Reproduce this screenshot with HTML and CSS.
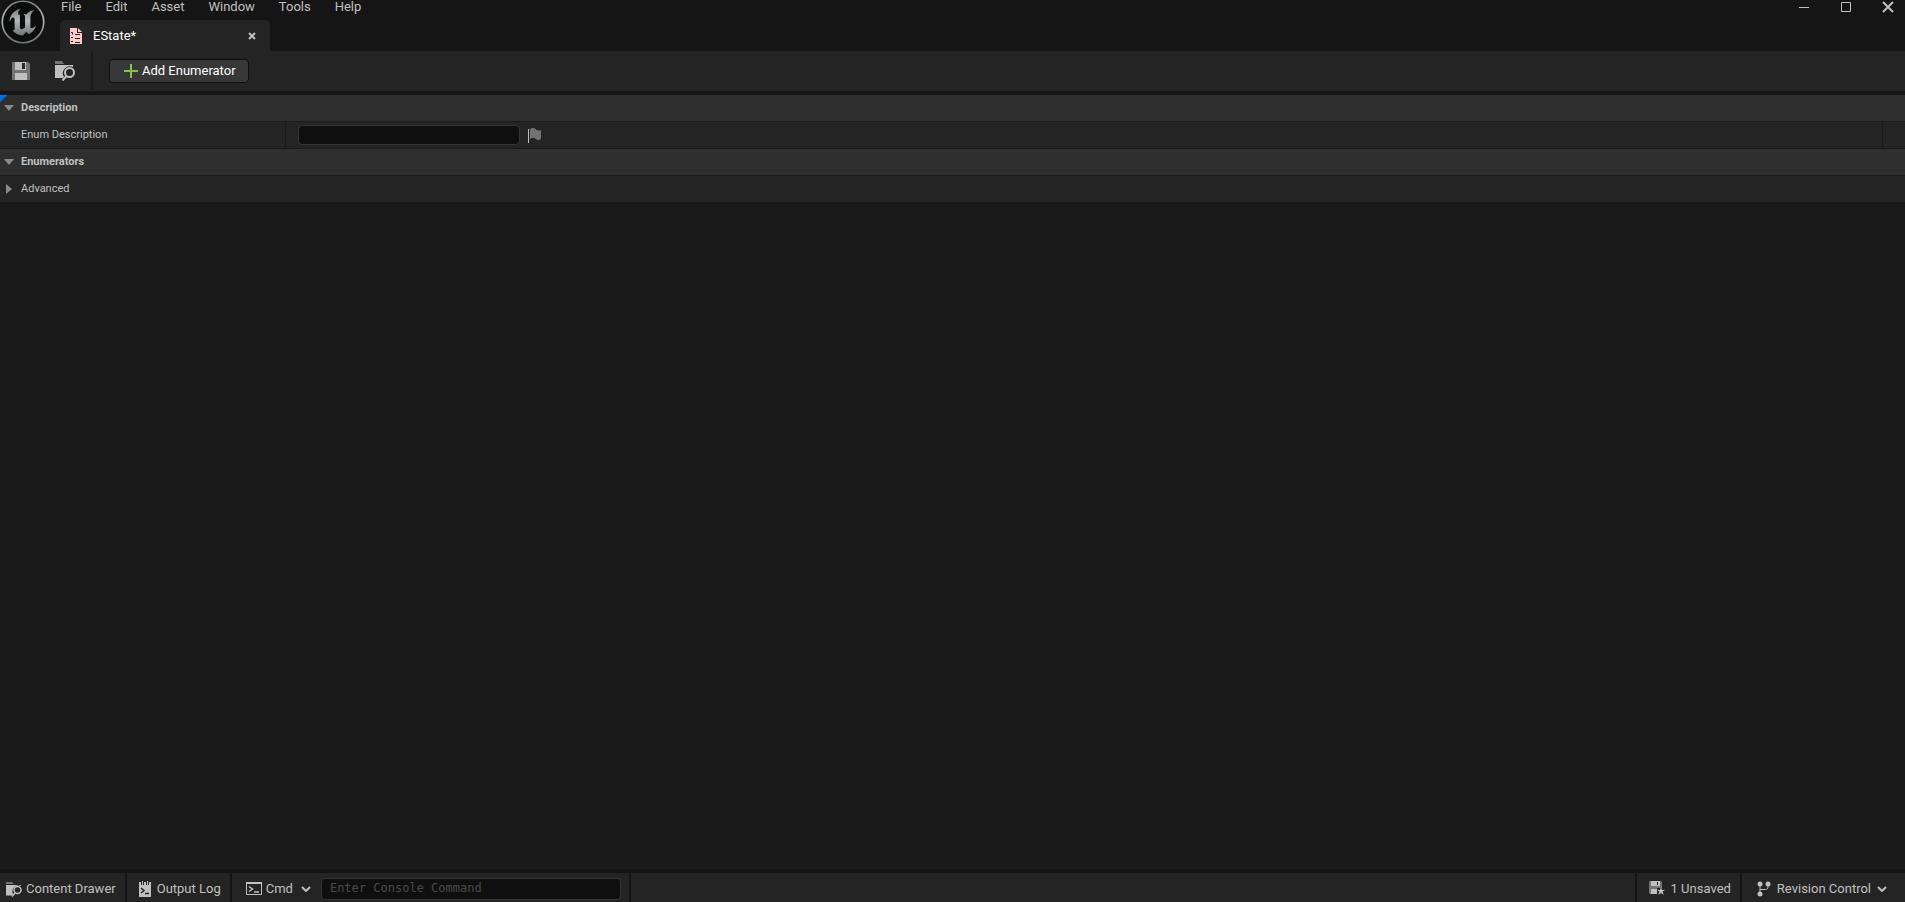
FILE: index.html
```html
<!DOCTYPE html>
<html lang="en">
<head>
    <meta charset="UTF-8">
    <meta name="viewport" content="width=device-width, initial-scale=1.0">
    <title>EState</title>
    <link rel="stylesheet" href="styles.css">
</head>
<body>

    <!-- Title bar -->
    <header class="titlebar">
        <a class="logo" href="#" aria-label="Unreal Editor">
            <svg width="44" height="44" viewBox="0 0 24 24">
                <defs>
                    <linearGradient id="metal" x1="0" y1="0" x2="0" y2="1">
                        <stop offset="0" stop-color="#7c8080"/>
                        <stop offset="0.45" stop-color="#b4b8b8"/>
                        <stop offset="1" stop-color="#6c7474"/>
                    </linearGradient>
                </defs>
                <circle cx="12" cy="12" r="11.300" fill="#0c0c0c" stroke="url(#metal)" stroke-width="0.900"/>
                <path fill="url(#metal)" d="M19.130 13.729c-.206.997-1.126 3.557-4.060 4.942l-1.179-1.325-1.988 2a7.338 7.338 0 0 1-5.804-2.978 2.859 2.859 0 0 0 .65.123c.326.006.678-.114.678-.66v-5.394a.89.89 0 0 0-1.116-.89c-.92.212-1.656 2.509-1.656 2.509a7.304 7.304 0 0 1 2.528-5.597 7.408 7.408 0 0 1 3.730-1.721c-1.006.573-1.570 1.507-1.570 2.290 0 1.262.76 1.109.984.923v7.280a1.157 1.157 0 0 0 .148.256 1.075 1.075 0 0 0 .88.445c.76 0 1.747-.868 1.747-.868V9.172c0-.6-.452-1.324-.905-1.572 0 0 .838-.149 1.484.346a5.537 5.537 0 0 1 .387-.425c1.508-1.480 2.929-1.902 4.112-2.112 0 0-2.151 1.690-2.151 3.960 0 1.687.043 5.801.043 5.801.799.771 1.986-.342 3.059-1.441z"/>
            </svg>
        </a>
        <div class="title-main">
            <nav class="menu">
                <button>File</button>
                <button>Edit</button>
                <button>Asset</button>
                <button>Window</button>
                <button>Tools</button>
                <button>Help</button>
            </nav>
            <div class="tab">
                <svg width="12" height="16" viewBox="0 0 12 16">
                    <path fill="#ffc9c9" d="M0 0h7v5h5v11H0z"/>
                    <path fill="#ffc9c9" d="M8 0l4 4H8z"/>
                    <path stroke="#242424" fill="none" d="M5 6.500h5M5 10.500h5M5 14.500h5M1 4.500h1.500v2M1 9.500h2M1 13.500h2"/>
                </svg>
                <span class="tab-name">EState*</span>
                <button class="tab-close" aria-label="Close tab">
                    <svg width="8" height="8" viewBox="0 0 8 8"><path d="M1 1l6 6M7 1l-6 6" stroke="#c0c0c0" stroke-width="2"/></svg>
                </button>
            </div>
        </div>
        <div class="window-buttons">
            <button aria-label="Minimize"><svg width="12" height="12" viewBox="0 0 12 12"><path d="M1 6.500h10"/></svg></button>
            <button aria-label="Maximize"><svg width="12" height="12" viewBox="0 0 12 12"><path d="M1.500 1.500h9v9h-9z"/></svg></button>
            <button aria-label="Close"><svg width="12" height="12" viewBox="0 0 12 12"><path class="thick" d="M1 1l10 10M11 1l-10 10"/></svg></button>
        </div>
    </header>

    <!-- Toolbar -->
    <div class="toolbar">
        <button class="tool" aria-label="Save">
            <svg width="18" height="18" viewBox="0 0 18 18">
                <path fill="#737373" d="M0 0h16l2 2v16H0z"/>
                <path fill="#c0c0c0" d="M3 0h11v8H3zM3 11h12v7H3z"/>
                <path fill="#2a2a2a" d="M10 1h3v6h-3z"/>
            </svg>
        </button>
        <button class="tool" aria-label="Browse to asset">
            <svg width="20" height="20" viewBox="0 0 20 20">
                <path fill="#737373" d="M0 0h7l2 3H0z"/>
                <path fill="#c0c0c0" d="M0 4h18v2a7 7 0 0 0-9 10l-1 1H0z"/>
                <circle cx="14.500" cy="11.500" r="4.500" fill="#242424" stroke="#c0c0c0" stroke-width="2"/>
                <path d="M11.500 15l-4 4.500" stroke="#c0c0c0" stroke-width="2"/>
            </svg>
        </button>
        <span class="divider"></span>
        <button class="add-btn">
            <svg width="14" height="14" viewBox="0 0 14 14"><path d="M7 0v14M0 7h14" stroke="#8bc24a" stroke-width="2"/></svg>
            Add Enumerator
        </button>
    </div>

    <!-- Details panel -->
    <main class="details">
        <h2 class="category focused">
            <button><svg class="arrow" width="10" height="10" viewBox="0 0 10 10"><path d="M0 2h10L5 8z"/></svg>Description</button>
        </h2>
        <div class="property">
            <label class="property-name" for="enum-description">Enum Description</label>
            <div class="property-value">
                <input type="text" id="enum-description">
                <button class="flag" aria-label="Localize">
                    <svg width="14" height="16" viewBox="0 0 14 16">
                        <path fill="#c0c0c0" d="M0 2h1v14H0z"/>
                        <path fill="#737373" d="M2 2c2-1.500 4-1.500 5.500 0S11 4 13 3v9c-2 1.500-4 1-5.500-.3S4 10.500 2 12z"/>
                    </svg>
                </button>
            </div>
            <div class="property-extra"></div>
        </div>
        <h2 class="category">
            <button><svg class="arrow" width="10" height="10" viewBox="0 0 10 10"><path d="M0 2h10L5 8z"/></svg>Enumerators</button>
        </h2>
        <div class="category advanced">
            <button><svg class="arrow" width="10" height="10" viewBox="0 0 10 10"><path d="M2 0v10l6-5z"/></svg>Advanced</button>
        </div>
    </main>

    <!-- Status bar -->
    <footer class="statusbar">
        <button class="status-item drawer">
            <svg width="16" height="16" viewBox="0 0 16 16">
                <path fill="#737373" d="M0 1h6l2 2H0z"/>
                <path fill="#c0c0c0" d="M0 4h15v1a6 6 0 0 0-8 8l-1 1.500H0z"/>
                <circle cx="11.500" cy="9" r="3.500" fill="#242424" stroke="#c0c0c0" stroke-width="1.500"/>
                <path d="M9 12l-3 3.500" stroke="#c0c0c0" stroke-width="1.500"/>
            </svg>
            Content Drawer
        </button>
        <button class="status-item">
            <svg width="12" height="16" viewBox="0 0 12 16">
                <path fill="#c0c0c0" d="M0 1h2v3h1V0h1v4h1V1h2v3h1V0h1v4h1V1h2v15H0z"/>
                <path d="M2 7l3 2.500L2 12M6 12.500h4" fill="none" stroke="#242424" stroke-width="1.500"/>
            </svg>
            Output Log
        </button>
        <div class="status-item console">
            <button class="cmd">
                <svg width="16" height="13" viewBox="0 0 16 13">
                    <path d="M.5.5h15v12H.5z" fill="none" stroke="#c0c0c0"/>
                    <path d="M0 0h16v2H0z" fill="#c0c0c0"/>
                    <path d="M3 4.500l3.500 2.500L3 9.500M8 10h5" fill="none" stroke="#c0c0c0" stroke-width="1.500"/>
                </svg>
                Cmd
                <svg class="chevron" width="10" height="6" viewBox="0 0 10 6"><path d="M1 1l4 4 4-4"/></svg>
            </button>
            <input type="text" placeholder="Enter Console Command" aria-label="Console command">
        </div>
        <div class="status-space"></div>
        <button class="status-item">
            <svg width="16" height="15" viewBox="0 0 16 15">
                <path fill="#737373" d="M0 0h12l1 1v12H0z"/>
                <path fill="#c0c0c0" d="M2 0h9v5H2zM2 8h7v5H2z"/>
                <path fill="#242424" d="M8 1h1v3H8zM8 7h5v6H8z"/>
                <path fill="#c0c0c0" d="M12 6l1 3 3-.2-2.400 1.900 1.200 3.300-2.800-2-2.800 2 1.200-3.300L8 8.800l3 .2z"/>
            </svg>
            1 Unsaved
        </button>
        <button class="status-item revision">
            <svg width="14" height="16" viewBox="0 0 14 16">
                <g fill="#c0c0c0"><circle cx="3" cy="3" r="2.500"/><circle cx="11" cy="3" r="2.500"/><circle cx="3" cy="13" r="2.500"/></g>
                <path d="M3 3v10M11 3v3c0 1.500-1 2.500-2.500 2.500H3" fill="none" stroke="#c0c0c0"/>
            </svg>
            Revision Control
            <svg class="chevron" width="10" height="6" viewBox="0 0 10 6"><path d="M1 1l4 4 4-4"/></svg>
        </button>
    </footer>

</body>
</html>
```
FILE: styles.css
```css
* {
    box-sizing: border-box;
}

body {
    margin: 0;
    min-height: 100vh;
    display: flex;
    flex-direction: column;
    background-color: #1a1a1a;
    color: #c0c0c0;
    font-family: Roboto, Arial, sans-serif;
    font-size: 13px;
    line-height: 16px;
}

button,
input {
    font: inherit;
    color: inherit;
}

button {
    display: flex;
    align-items: center;
    padding: 0;
    background: none;
    border: none;
    white-space: nowrap;
    cursor: pointer;
}

input {
    background-color: #0f0f0f;
    border: 1px solid #353535;
    border-radius: 4px;
    outline: none;
}

svg {
    flex-shrink: 0;
}

/* Title bar */
.titlebar {
    display: flex;
    background-color: #151515;
}

.logo {
    width: 60px;
    padding-left: 1px;
}

.logo svg {
    display: block;
}

.title-main {
    flex: 1;
}

.menu {
    display: flex;
    gap: 24px;
    height: 20px;
    padding-left: 1px;
    align-items: flex-start;
}

.menu button {
    line-height: 14px;
}

.tab {
    display: flex;
    align-items: center;
    width: 210px;
    height: 31px;
    padding: 0 14px 0 10px;
    background-color: #242424;
    border-radius: 5px 5px 0 0;
    color: #fff;
}

.tab-name {
    flex: 1;
    margin-left: 11px;
}

.window-buttons {
    display: flex;
    gap: 30px;
    padding-right: 11px;
    height: 13px;
    align-items: flex-end;
}

.window-buttons path {
    fill: none;
    stroke: #c0c0c0;
}

.window-buttons .thick {
    stroke-width: 2;
}

/* Toolbar */
.toolbar {
    display: flex;
    align-items: center;
    height: 44px;
    padding-left: 12px;
    background-color: #242424;
    border-bottom: 4px solid #151515;
}

.tool {
    margin-right: 25px;
}

.tool + .divider {
    margin-left: -9px;
}

.divider {
    width: 2px;
    height: 38px;
    background-color: #1a1a1a;
}

.add-btn {
    gap: 4px;
    height: 24px;
    margin-left: 16px;
    padding: 0 12px 0 14px;
    background-color: #383838;
    border: 1px solid #0f0f0f;
    border-radius: 4px;
    color: #fff;
}

/* Details panel */
.details {
    flex: 1;
    font-size: 11px;
}

.category {
    display: flex;
    height: 27px;
    margin: 0;
    padding-left: 4px;
    background-color: #2f2f2f;
    border-bottom: 1px solid #1a1a1a;
    font-size: 11px;
    font-weight: bold;
}

.category button {
    flex: 1;
    gap: 7px;
}

.focused {
    background-image: linear-gradient(135deg, #0070e0 5px, transparent 5px);
}

.advanced {
    background-color: #242424;
    font-weight: normal;
}

.arrow {
    fill: #8a8a8a;
}

.property {
    display: flex;
    height: 27px;
    background-color: #242424;
    border-bottom: 1px solid #1a1a1a;
}

.property-name {
    width: 286px;
    padding-left: 21px;
    line-height: 26px;
    border-right: 1px solid #1a1a1a;
}

.property-value {
    display: flex;
    flex: 1;
    align-items: center;
    gap: 8px;
    padding-left: 12px;
}

.property-value input {
    width: 222px;
    height: 20px;
    padding: 0 6px;
}

.property-extra {
    width: 23px;
    border-left: 1px solid #1a1a1a;
}

/* Status bar */
.statusbar {
    display: flex;
    height: 33px;
    background-color: #242424;
    border-top: 4px solid #151515;
}

.status-item {
    display: flex;
    align-items: center;
    gap: 6px;
    padding: 2px 9px 0 12px;
    border-right: 2px solid #151515;
}

.drawer {
    gap: 4px;
    padding-left: 6px;
}

.console {
    gap: 10px;
    padding-left: 14px;
    padding-right: 8px;
}

.cmd {
    gap: 4px;
}

.console input {
    width: 300px;
    height: 22px;
    padding: 0 8px 2px;
    font-family: "DejaVu Sans Mono", monospace;
    font-size: 12px;
}

.console input::placeholder {
    color: #4a4a4a;
}

.cmd .chevron {
    margin-left: 4px;
}

.chevron path {
    fill: none;
    stroke: #c0c0c0;
    stroke-width: 2;
}

.status-space {
    flex: 1;
    border-right: 2px solid #151515;
}

.revision {
    padding-left: 15px;
    padding-right: 18px;
    border-right: none;
}
```
